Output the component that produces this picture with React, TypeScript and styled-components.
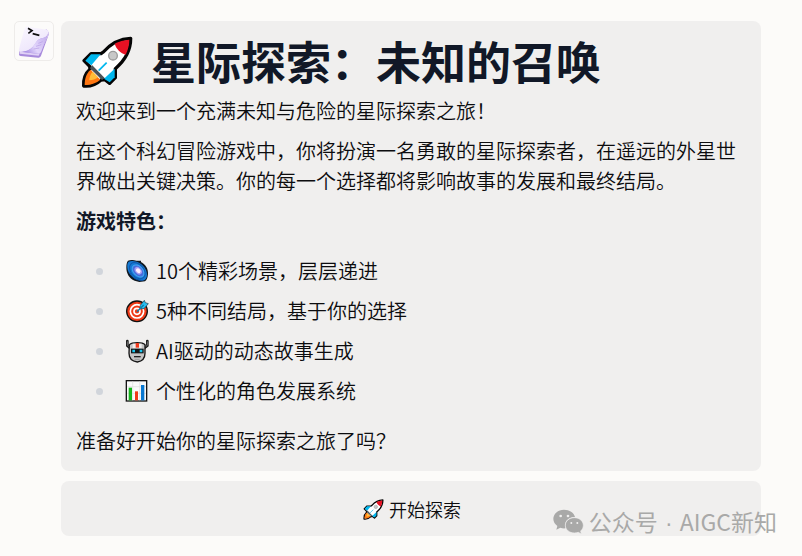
import React from "react";
import styled, { createGlobalStyle } from "styled-components";

const GlobalStyle = createGlobalStyle`
  *, *::before, *::after { box-sizing: border-box; }
  body {
    margin: 0;
    background: #fcfbf9;
    color: #0c0c0e;
    font-family: "Noto Sans CJK SC", "Open Sans", sans-serif;
    font-size: 20px;
    font-weight: 350;
    line-height: 30px;
  }
`;

const Page = styled.main`
  position: relative;
  display: flex;
  align-items: flex-start;
  gap: 7px;
  padding: 21px 41px 20px 14px;
`;

const Avatar = styled.div`
  flex: none;
  width: 40px;
  height: 40px;
  border: 1px solid #eeecea;
  border-radius: 5px;
  background: #fcfbfa;
  overflow: hidden;

  svg {
    display: block;
    width: 100%;
    height: 100%;
  }
`;

const Column = styled.div`
  flex: 1;
  min-width: 0;
  display: flex;
  flex-direction: column;
  gap: 10px;
`;

const Message = styled.article`
  display: flex;
  flex-direction: column;
  gap: 10px;
  padding: 15px;
  border-radius: 8px;
  background: #f0efee;
`;

const Title = styled.h1`
  display: flex;
  align-items: center;
  gap: 15px;
  margin: 0;
  font-size: 45px;
  font-weight: 700;
  line-height: 50px;
  color: #111827;
`;

const Text = styled.p`
  margin: 0;
`;

const Strong = styled.strong`
  font-weight: 700;
  color: #111827;
`;

const Features = styled.ul`
  display: flex;
  flex-direction: column;
  gap: 10px;
  margin: 10px 0;
  padding: 0 0 0 20px;
  list-style: none;
`;

const Feature = styled.li`
  display: flex;
  align-items: center;

  &::before {
    content: "";
    flex: none;
    width: 7px;
    height: 7px;
    margin-right: 22px;
    border-radius: 50%;
    background: #d1d5db;
  }
`;

const Emoji = styled.svg`
  flex: none;
  width: 24px;
  height: 24px;
  margin-right: 7px;
`;

const RocketSvg = styled.svg<{ $width: number; $height: number }>`
  flex: none;
  width: ${(p) => p.$width}px;
  height: ${(p) => p.$height}px;
  overflow: visible;
`;

const StartButton = styled.button`
  display: flex;
  align-items: center;
  justify-content: center;
  gap: 4px;
  width: 100%;
  height: 55px;
  border: 0;
  border-radius: 8px;
  background: #f0efee;
  color: inherit;
  font: inherit;
  font-size: 18px;
  cursor: pointer;
`;

const Watermark = styled.div`
  position: absolute;
  right: 25px;
  bottom: 17px;
  display: flex;
  align-items: center;
  gap: 5px;
  color: #a9a9a8;
  font-weight: 400;
  font-size: 23px;
  line-height: 32px;
  white-space: pre;
  pointer-events: none;

  svg {
    width: 31px;
    height: 26px;
  }
`;

const Dot = styled.span`
  margin: 0 2px;
  font-family: "Liberation Sans", sans-serif;
`;

const Rocket = ({ width, height }: { width: number; height: number }) => (
  <RocketSvg $width={width} $height={height} viewBox="0 6 180 150" aria-hidden="true">
    <path
      d="M164 13C133 14 105 28 82 54L75 59H45L24 80L41 97L42 106C27 119 22 137 23 156C41 158 62 150 75 138L87 137L101 148L118 131V104C151 76 164 44 164 13Z"
      fill="#fff"
      stroke="#050505"
      strokeWidth="10"
      strokeLinejoin="round"
    />
    <path d="M45 61H74L46 94L28 80Z" fill="#00b7ee" />
    <path d="M84 134L116 104V130L101 145Z" fill="#00b7ee" />
    <path d="M44 107C30 119 26 136 26 153C44 154 61 147 73 137Z" fill="#ff7611" />
    <path d="M50 113C43 121 40 130 40 139C50 139 59 136 66 130Z" fill="#ffbd38" />
    <path d="M48 93L86 132L78 138L42 103Z" fill="#4b5256" />
    <path d="M160 17C144 18 129 22 116 29C120 44 134 58 149 62C156 47 160 32 160 17Z" fill="#e81123" />
    <circle cx="111" cy="65" r="13" fill="#c8c8c8" stroke="#9b9b9b" strokeWidth="4" />
    <path d="M92 86L68 110" stroke="#00b7ee" strokeWidth="5" />
  </RocketSvg>
);

const Galaxy = () => (
  <Emoji viewBox="0 0 72 72" aria-hidden="true">
    <path
      d="M9 5C18 1 28 4 34 5L48 5V9C62 17 70 29 69 45C68 57 65 64 60 67L43 69L29 65C12 58 4 42 4 26C4 17 5 9 9 5Z"
      fill="#101820"
    />
    <path d="M11 8C28 2 48 12 58 25C68 38 69 57 59 63C44 69 24 59 15 46C6 34 4 14 11 8Z" fill="#1479d4" />
    <g transform="rotate(47 37 35)" fill="none">
      <ellipse cx="37" cy="35" rx="28" ry="19" stroke="#1158ac" strokeWidth="3" />
      <ellipse cx="39" cy="34" rx="21" ry="14" fill="#466cdc" stroke="#43a6f0" strokeWidth="3" />
      <ellipse cx="39" cy="33" rx="13" ry="9" fill="#a39cf1" />
      <ellipse cx="39" cy="33" rx="8" ry="6" fill="#fff0ff" />
    </g>
    <path d="M14 41C23 58 38 65 54 64" fill="none" stroke="#0b4f9d" strokeWidth="3" />
  </Emoji>
);

const Target = () => (
  <Emoji viewBox="0 0 72 72" aria-hidden="true">
    <circle cx="36" cy="37" r="31" fill="#f03a17" stroke="#101010" strokeWidth="4" />
    <circle cx="36" cy="37" r="20" fill="none" stroke="#fff" strokeWidth="5" />
    <circle cx="36" cy="37" r="9" fill="#f03a17" stroke="#fff" strokeWidth="5" />
    <path d="M46 19L58 4L61 11L70 14L57 29L45 29Z" fill="#28bdf0" stroke="#163743" strokeWidth="2" />
    <path d="M36 38L56 18" stroke="#087eae" strokeWidth="4" />
  </Emoji>
);

const Robot = () => (
  <Emoji viewBox="0 0 72 72" aria-hidden="true">
    <path d="M7 6V20L16 28M67 6V20L57 28" fill="none" stroke="#171717" strokeWidth="8" strokeLinecap="round" />
    <path d="M7 7V19L16 26M67 7V19L57 26" fill="none" stroke="#707070" strokeWidth="3" />
    <path d="M13 17C22 9 52 9 60 17V43C60 57 52 67 37 69C21 67 12 57 12 43Z" fill="#c4c4c4" stroke="#151515" strokeWidth="4" />
    <path d="M23 14H50V28H23Z" fill="#eeeeee" />
    <path d="M32 12H42V26H32Z" fill="#f03c1e" />
    <path d="M18 29H56V43H18Z" fill="#151515" />
    <path d="M22 32H30V40H22ZM44 32H52V40H44Z" fill="#18c5ef" />
    <path d="M27 53H47" stroke="#222" strokeWidth="4" />
    <path d="M29 61H44" stroke="#9a9a9a" strokeWidth="3" />
  </Emoji>
);

const Chart = () => (
  <Emoji viewBox="0 0 72 72" aria-hidden="true">
    <rect x="4" y="5" width="61" height="61" fill="#fafafa" stroke="#151515" strokeWidth="4" />
    <path d="M7 23H63M7 43H63M23 7V64M44 7V64" stroke="#dddddd" strokeWidth="2" />
    <path d="M11 26H21V64H11Z" fill="#16b51c" />
    <path d="M30 37H39V64H30Z" fill="#f03a17" />
    <path d="M48 18H58V64H48Z" fill="#0878d1" />
  </Emoji>
);

const AvatarIcon = () => (
  <svg viewBox="0 0 114 114" role="img" aria-label="助手">
    <defs>
      <linearGradient id="sheet" x1="0" y1="0" x2="0.6" y2="1">
        <stop offset="0" stopColor="#fbf8ff" />
        <stop offset="1" stopColor="#ece4fb" />
      </linearGradient>
      <linearGradient id="curl" x1="0" y1="0.7" x2="1" y2="0.2">
        <stop offset="0" stopColor="#a58be3" />
        <stop offset="0.4" stopColor="#e2d6fb" />
        <stop offset="1" stopColor="#c3aeed" />
      </linearGradient>
    </defs>
    <path d="M14 83L12 97C12 100 14 102 17 102L69 107C73 107 76 105 78 101L101 38L98 25Z" fill="#a88bdc" />
    <path d="M15 88L14 95L71 101L100 40L98 30Z" fill="#e0d2f6" />
    <path d="M15 89L70 96C74 96 76 94 78 90L101 31L94 22Z" fill="#b49be2" />
    <path
      d="M29 19C31 15 34 13 38 14L95 23C100 24 102 28 100 32C96 44 91 46 79 49C64 54 63 65 53 75C43 86 26 91 15 89C11 88 11 85 12 81Z"
      fill="url(#sheet)"
    />
    <path d="M100 32C96 44 91 46 79 49C64 54 62 64 53 75C45 84 32 90 20 89L69 95C74 96 77 93 79 88Z" fill="url(#curl)" />
    <path d="M70 64L83 59M63 73L79 68M56 81L73 78" stroke="#b79de6" strokeWidth="2" />
    <path d="M39 19L51 26L40 34M53 35L73 40" fill="none" stroke="#111" strokeWidth="5" />
  </svg>
);

const WeChatIcon = () => (
  <svg viewBox="0 0 93 78" aria-hidden="true">
    <path
      d="M33 2C15 2 1 14 1 30C1 39 6 46 13 51L10 62L22 56C27 58 33 59 38 58C31 39 46 23 66 24C63 11 49 2 33 2Z"
      fill="#a9a9a8"
    />
    <path
      d="M64 26C49 26 37 36 37 49C37 62 49 72 64 72C68 72 72 71 76 70L85 75L83 66C88 62 91 56 91 49C91 36 79 26 64 26Z"
      fill="#a9a9a8"
      stroke="#f0efee"
      strokeWidth="2"
    />
    <g fill="#f0efee">
      <circle cx="23" cy="21" r="4" />
      <circle cx="45" cy="21" r="4" />
      <circle cx="55" cy="42" r="3" />
      <circle cx="73" cy="42" r="3" />
    </g>
  </svg>
);

const features = [
  { icon: <Galaxy />, text: "10个精彩场景，层层递进" },
  { icon: <Target />, text: "5种不同结局，基于你的选择" },
  { icon: <Robot />, text: "AI驱动的动态故事生成" },
  { icon: <Chart />, text: "个性化的角色发展系统" },
];

export default function App() {
  return (
    <>
      <GlobalStyle />
      <Page lang="zh-CN">
        <Avatar>
          <AvatarIcon />
        </Avatar>
        <Column>
          <Message>
            <Title>
              <Rocket width={60} height={50} />
              星际探索：未知的召唤
            </Title>
            <Text>欢迎来到一个充满未知与危险的星际探索之旅！</Text>
            <Text>
              在这个科幻冒险游戏中，你将扮演一名勇敢的星际探索者，在遥远的外星世界做出关键决策。你的每一个选择都将影响故事的发展和最终结局。
            </Text>
            <Text>
              <Strong>游戏特色：</Strong>
            </Text>
            <Features>
              {features.map((f) => (
                <Feature key={f.text}>
                  {f.icon}
                  {f.text}
                </Feature>
              ))}
            </Features>
            <Text>准备好开始你的星际探索之旅了吗？</Text>
          </Message>
          <StartButton type="button">
            <Rocket width={24} height={20} />
            开始探索
          </StartButton>
        </Column>
        <Watermark>
          <WeChatIcon />
          <span>
            公众号 <Dot>·</Dot> AIGC新知
          </span>
        </Watermark>
      </Page>
    </>
  );
}
